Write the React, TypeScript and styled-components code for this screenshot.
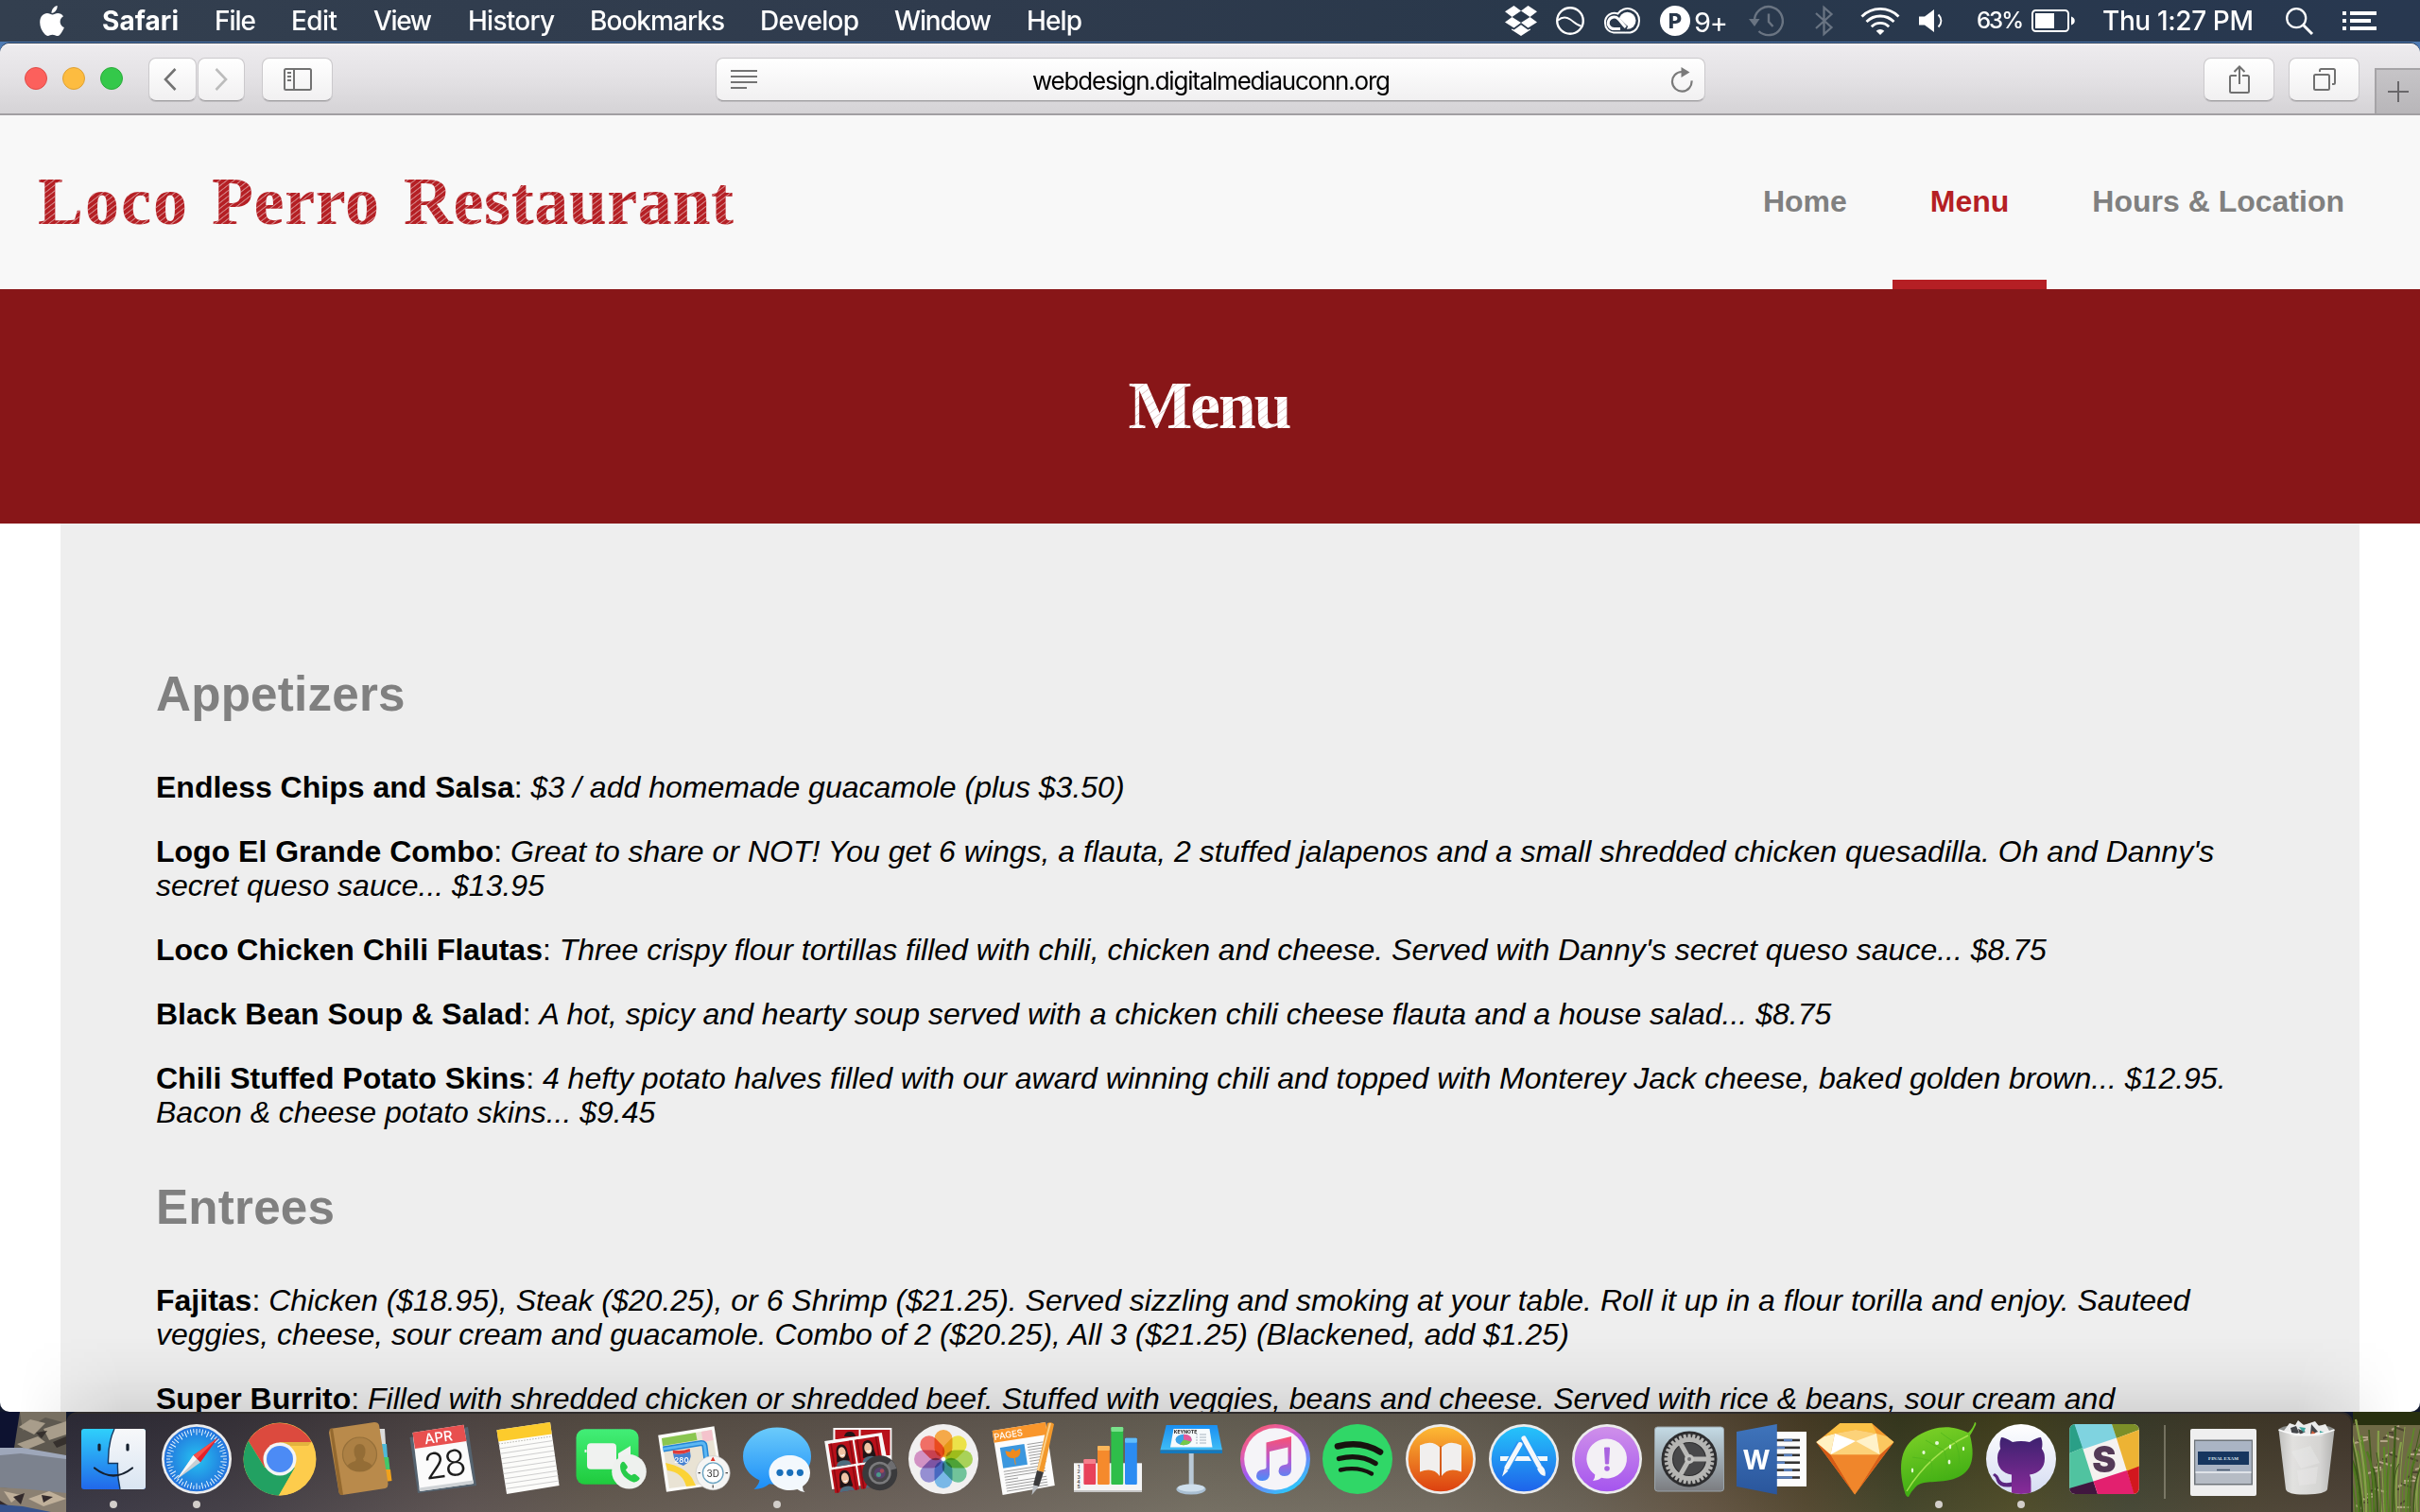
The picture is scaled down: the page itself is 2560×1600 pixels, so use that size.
import React, { useLayoutEffect, useRef, useState } from "react";
import styled, { createGlobalStyle } from "styled-components";

const GlobalStyle = createGlobalStyle`
  *, *::before, *::after { box-sizing: border-box; }
  html, body { margin: 0; padding: 0; width: 2560px; height: 1600px; overflow: hidden; background: #1a2438; }
  svg { display: block; overflow: visible; flex: none; }
`;

const ui = `Inter, Roboto, "Liberation Sans", sans-serif`;
const sans = `"Liberation Sans", Arial, Helvetica, sans-serif`;
const serif = `"Liberation Serif", "Times New Roman", serif`;

/* ---------- Fitted text: spreads the letters over an exact width ---------- */

const FitBox = styled.span<{ $w: number }>`
  display: inline-block;
  width: ${(p) => p.$w}px;
  white-space: nowrap;
  flex: none;
`;

function Fit({ w, children, className }: { w: number; children: string; className?: string }) {
  const ref = useRef<HTMLSpanElement>(null);
  const [spacing, setSpacing] = useState(0);
  useLayoutEffect(() => {
    if (!ref.current) return;
    const natural = ref.current.getBoundingClientRect().width;
    setSpacing((w - natural) / Math.max(1, children.length - 1));
  }, [w, children]);
  return (
    <FitBox $w={w} className={className}>
      <span ref={ref} style={{ letterSpacing: spacing }}>
        {children}
      </span>
    </FitBox>
  );
}

/* ---------- Desktop ---------- */

const Screen = styled.div`
  width: 2560px;
  height: 1600px;
  display: flex;
  flex-direction: column;
  overflow: hidden;
  background: linear-gradient(#4a6f9f 0, #4f7db8 60px, #131c36 200px, #11182c 100%);
`;

const MenuBar = styled.header`
  height: 44px;
  flex: none;
  display: flex;
  align-items: center;
  justify-content: space-between;
  padding: 0 46px 0 42px;
  background: linear-gradient(90deg, #333f4f 0%, #2f3b4d 40%, #29384b 65%, #283850 100%);
  color: #fff;
  font-family: ${ui};
`;

const MenuList = styled.nav`
  display: flex;
  align-items: center;
  height: 44px;
`;

const MenuWord = styled(Fit)<{ $gap: number; $bold?: boolean }>`
  margin-left: ${(p) => p.$gap}px;
  font-size: 28px;
  line-height: 44px;
  font-weight: ${(p) => (p.$bold ? 700 : 500)};
`;

const StatusArea = styled.div`
  display: flex;
  align-items: center;
  height: 44px;
`;

const StatusItem = styled.div<{ $gap: number; $dim?: boolean }>`
  margin-left: ${(p) => p.$gap}px;
  display: flex;
  opacity: ${(p) => (p.$dim ? 0.3 : 1)};
`;

const StatusWord = styled(Fit)<{ $gap: number; $size: number; $weight?: number; $drop?: number }>`
  margin-left: ${(p) => p.$gap}px;
  margin-top: ${(p) => p.$drop ?? 0}px;
  font-size: ${(p) => p.$size}px;
  line-height: 44px;
  font-weight: ${(p) => p.$weight ?? 500};
`;

const Window = styled.main`
  height: 1448px;
  margin-top: 2px;
  flex: none;
  display: flex;
  flex-direction: column;
  overflow: hidden;
  position: relative;
  border-radius: 10px;
  background: #fff;
  box-shadow: 0 -1px 0 #22334c;
`;

const Toolbar = styled.div`
  height: 76px;
  flex: none;
  display: flex;
  align-items: flex-start;
  padding: 15px 0 0 26px;
  background: linear-gradient(#f6f5f7 0, #edebee 3px, #e4e2e5 35px, #d5d3d6 74px);
  border-bottom: 2px solid #a19fa2;
`;

const Lights = styled.div`
  display: flex;
  gap: 16px;
  margin-top: 10px;
`;

const Light = styled.i<{ $fill: string; $edge: string }>`
  width: 24px;
  height: 24px;
  border-radius: 50%;
  background: ${(p) => p.$fill};
  border: 1px solid ${(p) => p.$edge};
`;

const ToolButton = styled.div<{ $w: number; $gap: number; $padRight?: number }>`
  width: ${(p) => p.$w}px;
  height: 46px;
  margin-left: ${(p) => p.$gap}px;
  padding-right: ${(p) => p.$padRight ?? 0}px;
  flex: none;
  display: flex;
  align-items: center;
  justify-content: center;
  border-radius: 8px;
  border: 1px solid #cbc9cc;
  border-bottom: 1px solid #a3a1a4;
  background: linear-gradient(#fff, #f1f0f1);
  box-shadow: 0 1px 0 rgba(0, 0, 0, 0.12);
`;

const AddressBar = styled(ToolButton)`
  justify-content: space-between;
  padding: 0 12px 0 15px;
`;

const Address = styled(Fit)`
  font-family: ${ui};
  font-size: 26px;
  line-height: 44px;
  color: #000;
  margin: 3px 6px 0 0;
`;

const NewTab = styled.div`
  width: 48px;
  height: 48px;
  margin: 11px 0 0 16px;
  flex: none;
  display: flex;
  align-items: center;
  justify-content: center;
  border-top: 2px solid #a5a3a6;
  border-left: 2px solid #a5a3a6;
  background: linear-gradient(#c6c4c7, #b8b6b9);
`;

/* ---------- Restaurant page ---------- */

const SiteHeader = styled.div`
  height: 184px;
  flex: none;
  display: flex;
  justify-content: space-between;
  padding: 0 40px;
  background: #f8f8f8;
`;

const Brand = styled.h1`
  margin: 0;
  display: flex;
  gap: 26px;
  font: 700 72px/182px ${serif};
  color: transparent;
  background:
    repeating-linear-gradient(142deg, rgba(248, 248, 248, 0) 0 2.6px, rgba(248, 248, 248, 0.42) 3.2px 3.8px, rgba(248, 248, 248, 0) 4.4px 4.7px),
    #b51f24;
  -webkit-background-clip: text;
  background-clip: text;
`;

const SiteNav = styled.nav`
  display: flex;
  gap: 8px;
`;

const NavItem = styled.a<{ $active?: boolean }>`
  height: 184px;
  padding: 73px 40px 0;
  font: 700 32px/36px ${sans};
  color: ${(p) => (p.$active ? "#b51f24" : "#808080")};
  border-bottom: 10px solid ${(p) => (p.$active ? "#b51f24" : "transparent")};
`;

const Banner = styled.section`
  height: 248px;
  flex: none;
  display: flex;
  justify-content: center;
  background: #881618;
`;

const BannerTitle = styled.h2`
  margin: 0;
  font: 700 72px/246px ${serif};
  color: transparent;
  background:
    repeating-linear-gradient(142deg, rgba(136, 22, 24, 0) 0 4.5px, rgba(136, 22, 24, 0.22) 5px 5.4px, rgba(136, 22, 24, 0) 6px 7px),
    #fff;
  -webkit-background-clip: text;
  background-clip: text;
`;

const Sheet = styled.section`
  height: 940px;
  flex: none;
  margin: 0 64px;
  padding: 98px 99px 0 101px;
  overflow: hidden;
  background: #eee;
`;

const Course = styled.h3`
  margin: 54px 0 51px;
  font: 700 51.2px/58px ${sans};
  letter-spacing: 0.2px;
  color: #808080;
`;

const Dish = styled.p`
  margin: 0 0 32px;
  font: 32px/36px ${sans};
  color: #000;
  white-space: nowrap;
`;

const DockShade = styled.div`
  position: absolute;
  left: 0;
  right: 0;
  bottom: 0;
  height: 80px;
  pointer-events: none;
  background: linear-gradient(transparent, rgba(0, 0, 0, 0.03) 50%, rgba(0, 0, 0, 0.1));
  mask-image: linear-gradient(90deg, transparent 20px, #000 130px, #000 2430px, transparent 2540px);
`;

/* ---------- Dock ---------- */

const DockRow = styled.footer`
  height: 106px;
  flex: none;
  display: flex;
`;

const Dock = styled.div`
  width: 2419px;
  height: 106px;
  flex: none;
  display: flex;
  padding: 10px 0 0 6.3px;
  border-radius: 12px 12px 0 0;
  border-top: 2px solid #2f2c2c;
  border-right: 2px solid #2f2a24;
  background:
    linear-gradient(rgba(0, 0, 0, 0.12), rgba(255, 255, 255, 0.06)),
    linear-gradient(90deg, #302e3b 0, #3a353d 170px, #554b49 420px, #5b5147 560px, #655b53 900px, #6d675a 1200px, #6a6357 1450px, #625a4d 1600px, #5b4c39 1740px, #4c4027 1840px, #3a3c20 1940px, #47441f 2060px, #3d3f2c 2180px, #453d2b 2300px, #453a2e 2419px);
`;

const DockCell = styled.div<{ $w: number }>`
  width: ${(p) => p.$w}px;
  flex: none;
  display: flex;
  flex-direction: column;
  align-items: center;
`;

const RunDot = styled.i`
  width: 8px;
  height: 8px;
  margin-top: 2px;
  border-radius: 50%;
  background: #d2ceca;
`;

const DockLine = styled.div`
  width: 2px;
  height: 78px;
  margin: 2px 17px 0 19px;
  flex: none;
  background: rgba(200, 195, 175, 0.4);
`;

/* ---------- Small drawings ---------- */

const AppleMark = () => (
  <svg width="27" height="32" viewBox="0 0 27 32" fill="#fff">
    <path d="M18.6 0c.3 2.6-.8 4.6-2.1 6-1.300 1.300-2.600 1.900-4 1.900-.2-2.200.8-4.200 2-5.500C15.600 1.100 17.200.3 18.600 0z" />
    <path d="M13.500 9.600c1.500 0 3.200-1.500 5.700-1.500 2.200 0 4.400 1 5.800 3.100-5 3-4.200 9.900.9 11.900-1 2.700-2.400 5.200-4.300 7.300-1 1-2 1.500-3.200 1.500-1.900 0-2.600-1.100-4.900-1.100-2.300 0-3.100 1.100-4.900 1.100-1.300 0-2.400-.7-3.400-1.800C2 26.500.2 22 .2 17.800.2 11.500 4 8.100 7.900 8.100c2.300 0 4.200 1.500 5.600 1.500z" />
  </svg>
);

const DropboxMark = () => (
  <svg width="34" height="32" viewBox="0 0 34 32" fill="#fff">
    <path d="M9.500 0 17 5.500 7.500 12 0 6.200zM24.500 0 34 6.200 26.500 12 17 5.500zM7.500 12 17 18l-7.500 5.500L0 17.500zM26.500 12 34 17.500l-9.500 6L17 18z" />
    <path d="m7 24.500 2.700 1L17 20.200l7.300 5.300 2.700-1v1L17 32 7 25.500z" />
  </svg>
);

const WaveMark = () => (
  <svg width="30" height="30" viewBox="0 0 30 30" fill="none" stroke="#fff">
    <circle cx="15" cy="15" r="13.800" strokeWidth="2.400" />
    <path d="M2 14.500C6 11 10.500 10.500 15 13.500S22 19.500 26.500 20.500" strokeWidth="2" />
  </svg>
);

const CloudMark = () => (
  <svg width="38" height="28" viewBox="0 0 38 28">
    <path d="M10 26.500h17.500A10.500 12.500 0 0 0 37 14 12.300 12.300 0 0 0 14.500 6.500 9.800 10 0 0 0 1 16.500a9.800 10 0 0 0 9 10z" fill="none" stroke="#fff" strokeWidth="2" />
    <circle cx="24.500" cy="13.800" r="9" fill="#fff" />
    <path d="M14 14c3 1.500 6 7 10 8.500" fill="none" stroke="#29384b" strokeWidth="6" />
    <path d="M17 22.500h-6.500a6.200 6.200 0 1 1 4.300-10.600c2.600 2.200 4.700 6 8 9" fill="none" stroke="#fff" strokeWidth="3" />
  </svg>
);

const BadgeDisc = styled.span`
  width: 32px;
  height: 32px;
  border-radius: 50%;
  background: #fff;
  color: #29384b;
  font: 800 22px/32px ${ui};
  text-align: center;
`;

const TimeMachine = () => (
  <svg width="37" height="33" viewBox="0 0 37 33" fill="none" stroke="#fff" strokeWidth="2.400">
    <path d="M6 14a15 15 0 1 1 4.500 13" />
    <path d="M21 8.500v8.500l4.500 5" />
    <path d="M0 14h11.500L6 22z" fill="#fff" stroke="none" />
  </svg>
);

const Bluetooth = () => (
  <svg width="19" height="32" viewBox="0 0 19 32" fill="none" stroke="#fff" strokeWidth="2.200">
    <path d="m1 8 16.500 15L9.500 30V2l8 7L1 24" />
  </svg>
);

const Wifi = () => (
  <svg width="42" height="29" viewBox="0 0 42 29" fill="none" stroke="#fff" strokeWidth="2.800">
    <path d="M1.500 9.500a27.500 27.500 0 0 1 39 0" />
    <path d="M6.500 15a20.500 20.500 0 0 1 29 0" />
    <path d="M11.800 20.200a13 13 0 0 1 18.400 0" />
    <path d="M21 29l-4.300-4.300a6 6 0 0 1 8.600 0z" fill="#fff" stroke="none" />
  </svg>
);

const Speaker = () => (
  <svg width="26" height="24" viewBox="0 0 26 24">
    <path d="M0 7.500h6L16 0v24L6 16.500H0z" fill="#fff" />
    <path d="M20.500 5.500c3.800 4 3.800 9 0 13" fill="none" stroke="#fff" strokeWidth="2" />
  </svg>
);

const Battery = () => (
  <svg width="46" height="24" viewBox="0 0 46 24">
    <rect x="1" y="1" width="38" height="22" rx="3.500" fill="none" stroke="#fff" strokeWidth="2" />
    <rect x="4" y="4" width="20" height="16" fill="#fff" />
    <path d="M42 7.500c5 1.500 5 7.500 0 9z" fill="#fff" />
  </svg>
);

const SearchGlyph = () => (
  <svg width="29" height="29" viewBox="0 0 29 29" fill="none" stroke="#fff">
    <circle cx="11.200" cy="11.200" r="10" strokeWidth="2.300" />
    <path d="m18.500 18.500 9.500 9.500" strokeWidth="3" />
  </svg>
);

const ListGlyph = () => (
  <svg width="36" height="20" viewBox="0 0 36 20" fill="#fff">
    <path d="M0 0h4v4H0zM8 0h28v4H8zM0 8h4v4H0zM8 8h22v4H8zM0 16h4v4H0zM8 16h28v4H8z" />
  </svg>
);

const Chevron = ({ flip, color }: { flip?: boolean; color: string }) => (
  <svg width="14" height="24" viewBox="0 0 14 24" fill="none" stroke={color} strokeWidth="2.600">
    <path d={flip ? "M1.500 1 12 12 1.500 23" : "M12.500 1 2 12l10.500 11"} />
  </svg>
);

const SidebarGlyph = () => (
  <svg width="30" height="24" viewBox="0 0 30 24" fill="none" stroke="#727272" strokeWidth="2">
    <rect x="1" y="1" width="28" height="22" rx="1.500" />
    <path d="M11 1v22M4 5h4M4 9h4M4 13h4" />
  </svg>
);

const ReaderGlyph = () => (
  <svg width="28" height="20" viewBox="0 0 28 20" fill="#737373">
    <path d="M0 0h28v2H0zM0 6h28v2H0zM0 12h28v2H0zM0 18h17v2H0z" />
  </svg>
);

const ReloadGlyph = () => (
  <svg width="23" height="27" viewBox="0 0 23 27">
    <path d="M11 5a10.300 10.300 0 1 0 10.500 9.300" fill="none" stroke="#7a7a7a" strokeWidth="2.200" />
    <path d="M10.500 0 19.500 5.500 10.500 11z" fill="#7a7a7a" />
  </svg>
);

const ShareGlyph = () => (
  <svg width="22" height="30" viewBox="0 0 22 30" fill="none" stroke="#707070" strokeWidth="2">
    <path d="M8 11H2.500Q1 11 1 12.500v15Q1 29 2.500 29h17q1.500 0 1.500-1.500v-15Q21 11 19.500 11H14M11 20V1.500M5.500 7 11 1.500 16.500 7" />
  </svg>
);

const TabsGlyph = () => (
  <svg width="24" height="24" viewBox="0 0 24 24" fill="none" stroke="#707070" strokeWidth="2">
    <rect x="1" y="7" width="16" height="16" rx="1.500" />
    <path d="M7 4V2.500Q7 1 8.500 1H21.500Q23 1 23 2.500V15.500Q23 17 21.500 17H20" />
  </svg>
);

const PlusGlyph = () => (
  <svg width="22" height="22" viewBox="0 0 22 22" stroke="#69676a" strokeWidth="2">
    <path d="M11 0v22M0 11h22" />
  </svg>
);

/* ---------- Dock icons, drawn round a centre origin ---------- */

type Stop = [string, string];
const Grad = ({ id, stops, x2 = 0, y2 = 1 }: { id: string; stops: Stop[]; x2?: number; y2?: number }) => (
  <linearGradient id={id} x1="0" y1="0" x2={x2} y2={y2}>
    {stops.map(([o, c]) => (
      <stop key={o} offset={o} stopColor={c} />
    ))}
  </linearGradient>
);

const Ring = ({ fill }: { fill: string }) => (
  <>
    <circle r="37" fill="#ececec" />
    <circle r="34.300" fill={`url(#${fill})`} />
  </>
);

const range = (n: number) => Array.from({ length: n }, (_, i) => i);

const Finder = () => (
  <>
    <Grad id="fi1" stops={[["0", "#2fd0fb"], ["1", "#2168ea"]]} />
    <Grad id="fi2" stops={[["0", "#f7f8fa"], ["1", "#d9e5f2"]]} />
    <rect x="-34" y="-32" width="68" height="64" rx="3" fill="url(#fi1)" />
    <path d="M1-32h30q3 0 3 3v58q0 3-3 3H7Q4 19 4.500 4.500H-5.500Q-6-17 1-32z" fill="url(#fi2)" />
    <path d="M1-32Q-6-17-5.500 4.500H4.500Q4 19 7 32" fill="none" stroke="#14375e" strokeWidth="1.400" />
    <path d="M-15-15v5M15-15v5" stroke="#15202e" strokeWidth="3.200" strokeLinecap="round" />
    <path d="M-20 9.500q20 16 40 0" fill="none" stroke="#15202e" strokeWidth="2.200" strokeLinecap="round" />
  </>
);

const SafariIcon = () => (
  <>
    <radialGradient id="sa">
      <stop offset="0" stopColor="#26c3f1" />
      <stop offset="1" stopColor="#2272dc" />
    </radialGradient>
    <Ring fill="sa" />
    {range(60).map((i) => (
      <path key={i} d={i % 2 ? "M0-32v4" : "M0-32v6.500"} stroke="#e8f5fd" strokeWidth="1" transform={`rotate(${i * 6})`} />
    ))}
    <path d="M22.500-22.500 4 3.500-3.500-4z" fill="#e5202b" />
    <path d="M22.500-22.500-3.500-4 0 0z" fill="#f8514a" />
    <path d="M-21 21.500-3.500-4 4 3.500z" fill="#c9cfd4" />
    <path d="M-21 21.500-3.500-4 0 0z" fill="#f6f7f8" />
  </>
);

const Chrome = () => (
  <>
    <circle r="38.500" fill="#fdcc4c" />
    <path d="M-33.300-19.200A38.500 38.500 0 0 1 33.500-18H0L-16 9z" fill="#dc4a3e" />
    <path d="M-33.300-19.200A38.500 38.500 0 0 0-1 38.500L16 9-16 9z" fill="#22a162" />
    <path d="M33.500-18A38.500 38.500 0 0 1-1 38.500L16 9 8-18z" fill="#fdcc4c" />
    <path d="M33.500-18H0v4h30z" fill="#c99a2f" opacity=".5" />
    <circle r="17.500" fill="#f4f4f4" />
    <circle r="14" fill="#4c8bf5" />
  </>
);

const Contacts = () => (
  <>
    <path d="M18-32 24-32 25-16 20-16z" fill="#dcdcdc" />
    <path d="M20-16 26-16 27-2 22-2z" fill="#4fb9d8" />
    <path d="M22-2 28-2 29.500 11 23 11z" fill="#43c869" />
    <path d="M23 11 30 11 31.500 23 24 24z" fill="#f0a21c" />
    <path d="M-34-32 13-39q4 0 5 3l9.500 62q0 4-3 5L-21 38q-3 0-3.500-3L-35-28z" fill="#b98a4b" />
    <path d="M-34-32-31-32.500-20 37.800-21 38q-3 0-3.500-3z" fill="#94692f" />
    <circle cx="-2.500" cy="-5" r="18" fill="#ac8044" stroke="#96703a" strokeWidth="1.200" />
    <path d="M-2.500-16q6 0 6 8 0 5-2.500 7.500l1 2.500q7 2 8.500 5-5 6-13 6t-13-6q2-3 8.500-5l.8-2.500Q-8.500-3-8.500-8q0-8 6-8z" fill="#946d36" />
  </>
);

const IconText = styled.text<{ $size: number; $weight?: number; $serif?: boolean }>`
  font-family: ${(p) => (p.$serif ? serif : ui)};
  font-size: ${(p) => p.$size}px;
  font-weight: ${(p) => p.$weight ?? 400};
  text-anchor: middle;
`;

const CalendarIcon = () => (
  <>
    <path d="M-37.500-23 24-34 33 28-29 36z" fill="#55636f" />
    <path d="M-34.500-28 19.400-36.300 30 26-27 34z" fill="#fbfbfb" />
    <path d="M-34.500-28 19.400-36.300 22.500-19-32-11z" fill="#e8504f" />
    <path d="M-27 34 30 26 29.400 22.500-27.600 30.500z" fill="#cfd3d6" />
    <g transform="rotate(-8)">
      <IconText $size={15} $weight={500} x="-4" y="-18.500" fill="#fff">APR</IconText>
      <IconText $size={38} $weight={300} x="-2" y="19" fill="#1c1c1c" letterSpacing="-2">28</IconText>
    </g>
  </>
);

const NotesIcon = () => (
  <>
    <path d="M-33.500-30.700 23-39 32.600 28-23 37z" fill="#fcfcfa" />
    <path d="M-33.500-30.700 23-39 24.700-26.500-31.800-18.500z" fill="#fccb2c" />
    {range(9).map((i) => (
      <path key={i} d={`M${-30.800 + i * 0.9} ${-11 + i * 5.300}l56-8.400`} stroke="#c8c8c8" strokeWidth=".9" />
    ))}
    <path d="M-31.500-16l56-8" stroke="#a9a9a0" strokeWidth=".9" strokeDasharray="1.500 1.500" />
  </>
);

const Handset = () => (
  <path d="M-8-9.500q1.500-2 3-.5l3 4q1 1.500-.5 3l-1.200 1.300Q-1.500 2 2.500 4l1.500-1q1.500-1 3 0l3.500 3q1.500 1.200 0 2.800Q7.500 12 4 11-9 6-9.500-5.500-9.500-8-8-9.500z" />
);

const FaceTime = () => (
  <>
    <Grad id="ft" stops={[["0", "#42ee77"], ["1", "#1fcb3d"]]} />
    <rect x="-37.500" y="-31.700" width="66" height="58.500" rx="9" fill="url(#ft)" />
    <rect x="-26" y="-16.700" width="31" height="27.500" rx="4" fill="#f0f2f0" />
    <path d="M-28.500-10h2v3h-2z" fill="#f0f2f0" />
    <path d="M7-6 20-14V9L7 2z" fill="#f0f2f0" />
    <circle cx="18.500" cy="13.300" r="18.300" fill="#eef1ee" />
    <g transform="translate(18.500 13.300)" fill="#27cc49"><Handset /></g>
  </>
);

const MapsIcon = () => (
  <>
    <path d="M-37.800-25.300 21.500-34.700 31 26-29 34.700z" fill="#fbfbf9" />
    <path d="M-34-22 19-31 28 24-26 31z" fill="#e9e3d4" />
    <path d="M-34-22 2-28 3.500-20-33-14z" fill="#8ac650" />
    <path d="M8-29 19-31 20.500-20 9.500-18z" fill="#f4c3cc" />
    <path d="M-30 4Q-10 8-2 20L2 28-8 29Q-12 14-28 12z" fill="#fbd337" />
    <path d="M-32.500-10.500 8-17q3 0 3.500 3L14 6" fill="none" stroke="#2285d6" strokeWidth="6" />
    <path d="M-32.500-10.500 8-17q3 0 3.500 3L14 6" fill="none" stroke="#5db7f2" strokeWidth="3" />
    <path d="M-22-6q9 2 18-2 3 10-7 15-10-2-11-13z" fill="#4682d2" />
    <path d="M-22-6q9 2 18-2l-.3-3q-8 3-18 1.500z" fill="#df3a3a" />
    <IconText $size={8} $weight={600} x="-13" y="4" fill="#fff">280</IconText>
    <circle cx="20.200" cy="14.700" r="18" fill="#f5f5f4" stroke="#c3c3c3" strokeWidth=".6" />
    <circle cx="20.200" cy="14.700" r="10.800" fill="#fff" stroke="#6da5c2" strokeWidth="1.400" />
    <path d="M20.200-2.500 22.600 2h-4.800z" fill="#e23528" />
    <path d="M20.200 27.500v3M4.500 14.700h2.500M33.500 14.700H36" stroke="#444" strokeWidth="1.200" />
    <IconText $size={10} x="20.200" y="18.500" fill="#333">3D</IconText>
  </>
);

const MessagesIcon = () => (
  <>
    <Grad id="ms" stops={[["0", "#6bcbfb"], ["1", "#1c8ef8"]]} />
    <path d="M0-33.500C20-33.500 36-20 36-3S20 27 0 27q-4 0-8-.7-7 5.500-16.500 5.700 5-4.500 6-9.500C-30 17-36 8-36-3-36-20-20-33.500 0-33.500z" fill="url(#ms)" />
    <path d="M13.500-4C26-4 35 4 35 14.500q0 9-8 14.500 0 4 2.500 6-5-.5-8-3-4 1-8 1C1 33-8.500 25-8.500 14.500S1-4 13.500-4z" fill="#f3f8fd" />
    <g fill="#1a70bb">
      <circle cx="3" cy="14.300" r="3.600" />
      <circle cx="13.700" cy="14.300" r="3.600" />
      <circle cx="24.400" cy="14.300" r="3.600" />
    </g>
  </>
);

const Portrait = ({ x, y }: { x: number; y: number }) => (
  <g transform={`translate(${x} ${y})`}>
    <rect x="-13" y="-12.500" width="26" height="25" fill="#b8111a" />
    <path d="M-10-12.500v25M10-12.500v25" stroke="#8c0911" strokeWidth="1.600" />
    <path d="M0-10c5.500 0 6 6 6 11l1 7H-7l1-7C-6-4-5.500-10 0-10z" fill="#211517" />
    <ellipse cx="0" cy="-1.500" rx="4" ry="5.800" fill="#efc3a4" />
    <path d="M-8 12.500q1-5.500 8-5.500t8 5.500z" fill="#4d6c7e" />
    <path d="M-2 1q2 2 4 0" stroke="#fff" strokeWidth="1.200" fill="none" />
  </g>
);

const PhotoBooth = () => (
  <>
    <rect x="-28.600" y="-33" width="62" height="34" fill="#f6f6f6" />
    <path d="M-26.500-31H-1.500v10h-25zM.5-31h31V-4H.5z" fill="#b8111a" />
    <path d="M-17-24q1-5 6-5t6 5z" fill="#211517" />
    <path d="M-37.800-19 22.800-28 33 24-29.800 32z" fill="#f8f8f8" />
    <g transform="rotate(-9)">
      <Portrait x={-18} y={-8.500} />
      <Portrait x={10} y={-8.500} />
      <Portrait x={-19} y={19} />
      <Portrait x={9} y={19} />
    </g>
    <circle cx="20.700" cy="14.700" r="18.500" fill="#3a3a3c" />
    <path d="M20.700 14.700 33 1A18.500 18.500 0 0 1 38.500 10z" fill="#6d6d70" />
    <circle cx="20.700" cy="14.700" r="12" fill="#7a7a7c" />
    <circle cx="20.700" cy="14.700" r="9.500" fill="#454547" />
    <circle cx="20.700" cy="14.700" r="6" fill="#57426b" />
    <circle cx="19.500" cy="16.500" r="2.500" fill="#4b9a8a" />
    <circle cx="23" cy="12.500" r="2.200" fill="#a44a55" />
  </>
);

const petals = ["#f6a33a", "#ece13a", "#a3cf4c", "#66bf92", "#6fb3e6", "#8d86cf", "#cf8ac0", "#f0645a"];
const Petals = styled.g`
  isolation: isolate;
  rect { mix-blend-mode: multiply; }
`;
const PhotosIcon = () => (
  <>
    <circle r="37" fill="#f1f0f0" />
    <Petals>
      {petals.map((c, i) => (
        <rect key={c} x="-9.500" y="-31" width="19" height="29" rx="9.500" fill={c} opacity=".92" transform={`rotate(${i * 45})`} />
      ))}
    </Petals>
    <circle r="1.800" fill="#fff" />
  </>
);

const PagesIcon = () => (
  <>
    <path d="M-35.300-30 21-39 30.800 28-24.400 38z" fill="#fcfcfc" />
    <path d="M-35.300-30 21-39 22.800-26-33.400-17.300z" fill="#f9962b" />
    <g transform="rotate(-9)">
      <IconText $size={9.500} $weight={500} x="-14" y="-25" fill="#fff">PAGES</IconText>
      <rect x="-25" y="-16" width="26" height="22" fill="#3b97de" />
      <path d="M-12 4v-7q-8 0-8-9l5 2 3-3 3 3 5-2q0 9-7 9v7z" fill="#f08a1d" />
      {range(8).map((i) => (
        <path key={i} d={`M4 ${-15 + i * 3}h17`} stroke="#999" strokeWidth=".9" />
      ))}
      {range(8).map((i) => (
        <path key={i} d={`M-25 ${9.500 + i * 3}h${i === 3 ? 14 : 44}`} stroke="#999" strokeWidth=".9" />
      ))}
    </g>
    <path d="M23-38q4-2 7 1L19 14l-7-2z" fill="#f3992b" />
    <path d="M25-38l2 0L14 12.400l-2-.5z" fill="#fbd08a" />
    <path d="M12 12l7 2-5 15-6-1.500z" fill="#3a3a3c" />
    <path d="M8 27.500l6 1.500-7.500 9z" fill="#b9bdc2" />
  </>
);

const Bar = ({ x, y, c, t }: { x: number; y: number; c: string; t: string }) => (
  <>
    <rect x={x} y={y} width="12.800" height={27 - y} rx="1.200" fill={c} />
    <rect x={x} y={y} width="12.800" height="5" rx="1.200" fill={t} />
  </>
);

const NumbersIcon = () => (
  <>
    <rect x="-37" y="4.300" width="72" height="30" fill="#f5f5f5" />
    <path d="M-37 33h72v2h-72z" fill="#c5c5c5" />
    {[1, 2, 3, 4, 5].map((n) => (
      <IconText key={n} $size={5} $weight={700} x="-32" y={5 + n * 5.200} fill="#555">{n}</IconText>
    ))}
    <Bar x={-26.600} y={0} c="#e8425a" t="#f5808c" />
    <Bar x={-12} y={-14} c="#f58a2c" t="#fab75c" />
    <Bar x={2.400} y={-34} c="#2fbe4a" t="#79e28b" />
    <Bar x={17} y={-22.300} c="#2b8cf2" t="#62bdfa" />
  </>
);

const KeynoteIcon = () => (
  <>
    <Grad id="ke" stops={[["0", "#1a8ff2"], ["1", "#3fbdf6"]]} />
    <rect x="-3.300" y="-6" width="5" height="38" fill="#b9c9d6" />
    <ellipse cx="-1" cy="32" rx="15.600" ry="5.500" fill="#a9bfd2" />
    <ellipse cx="-1" cy="30.500" rx="14" ry="4" fill="#cfdfec" />
    <path d="M-27.300-36H26.600L32-9.500H-33.600z" fill="url(#ke)" />
    <path d="M-33.600-9.500H32V-6H-33.600z" fill="#1579bd" />
    <path d="M-19.500-32H18.500L21.500-12.500H-23z" fill="#f7fafc" />
    <IconText $size={5} $weight={800} x="-7" y="-27.500" fill="#333">KEYNOTE</IconText>
    <ellipse cx="-9" cy="-20.500" rx="8.500" ry="5.800" fill="#3ba3e8" />
    <path d="M-9-20.500v-5.800a8.500 5.800 0 0 1 8 8z" fill="#e35a9a" />
    <path d="M-9-20.500l8 2a8.500 5.800 0 0 1-12 3z" fill="#76c84a" />
    <path d="M4-26h2M4-23h2M4-20h2M4-17h2M8-26h7M8-23h7M8-20h7M8-17h7" stroke="#a7b4c0" strokeWidth="1.200" />
  </>
);

const ITunes = () => (
  <>
    <Grad id="it1" x2={0.6} stops={[["0", "#fd5b52"], [".35", "#e25bb0"], [".6", "#9a5cf5"], ["1", "#2fc3fb"]]} />
    <Grad id="it2" stops={[["0", "#fb5070"], [".55", "#b35cd6"], ["1", "#4a8cf8"]]} />
    <circle r="37" fill="url(#it1)" />
    <circle r="32.800" fill="#f5f4f8" />
    <path d="M-9.500-17.500 17-24V11q0 6.500-7 7-6 0-6.500-5 0-6 6.500-7 3-.2 3.500-2V-12.500L-6-8V16.500q-.5 6-7.500 6.500-6.500 0-6.500-5 0-6 7-7 3-.2 3.500-2z" fill="url(#it2)" />
  </>
);

const Spotify = () => (
  <>
    <circle r="37" fill="#30d767" />
    <g fill="none" stroke="#17130f" strokeLinecap="round">
      <path d="M-21-13.500Q4-20 24-7.500" strokeWidth="6.600" />
      <path d="M-19.500-.5Q2-6 19 4.500" strokeWidth="5.400" />
      <path d="M-18 11.500Q1 7.500 15 15.500" strokeWidth="4.400" />
    </g>
  </>
);

const Books = () => (
  <>
    <Grad id="ib" stops={[["0", "#fdbb35"], ["1", "#dc4010"]]} />
    <Ring fill="ib" />
    <path d="M-1 18Q-8 8-22 13.500V-14.500Q-9-21-1-12.500zM1 18Q8 8 22 13.500V-14.500Q9-21 1-12.500z" fill="#f1efee" />
    <path d="M0-14V19" stroke="#c94d1a" strokeWidth="1.200" />
  </>
);

const AppStore = () => (
  <>
    <Grad id="as" stops={[["0", "#25c4fa"], ["1", "#1e63ea"]]} />
    <Ring fill="as" />
    <g stroke="#f4f8fb" fill="none">
      <path d="M-25-.5h50" strokeWidth="5" />
      <path d="M-4-17-18 9.500" strokeWidth="7.500" stroke="#2a92f2" />
      <path d="M-1-21 16 8" strokeWidth="7.500" stroke="#2a92f2" />
      <path d="M-4-15.500-18 9" strokeWidth="5" strokeLinecap="round" />
      <path d="M0-22 16 7" strokeWidth="5.200" strokeLinecap="round" />
    </g>
    <path d="M-20.500 10l4 2.500-6.500 6zM14 10l5-3q5 5 3.500 11-6-1-8.500-8z" fill="#f4f8fb" />
  </>
);

const Feedback = () => (
  <>
    <Grad id="fb" stops={[["0", "#cf90ea"], ["1", "#a555ee"]]} />
    <Ring fill="fb" />
    <path d="M0-21.500A21.500 21 0 1 1-6 19.800Q-9 22.500-15 23q2.500-3 2.300-6.500A21.500 21 0 0 1 0-21.500z" fill="#f3f0f5" />
    <path d="M-2.500-12h5L1.600 5h-3.200z" fill="#a963e0" stroke="#a963e0" strokeWidth="1" strokeLinejoin="round" />
    <circle cy="10" r="2.800" fill="#a963e0" />
  </>
);

const Settings = () => (
  <>
    <Grad id="sp" stops={[["0", "#c4dbe6"], ["1", "#7b7c80"]]} />
    <rect x="-36.500" y="-34" width="73" height="68" rx="3" fill="url(#sp)" stroke="#9aa4aa" strokeWidth="1" />
    <circle r="29.500" fill="#2d2d2f" />
    {range(32).map((i) => (
      <path key={i} d="M-1.400-26.500h2.800L2-21h-4z" fill="#b5b5b3" transform={`rotate(${i * 11.250})`} />
    ))}
    <circle r="20.500" fill="none" stroke="#b5b5b3" strokeWidth="5" />
    <circle r="17" fill="#48484a" />
    <path d="M0 0H18M0 0-9-16M0 0-9 16" stroke="#b9b9b7" strokeWidth="5" />
    <circle r="5" fill="#c2c2c0" />
    <circle r="2" fill="#707072" />
  </>
);

const WordIcon = () => (
  <>
    <rect x="0" y="-29" width="36" height="58" fill="#fcfcfc" />
    {range(6).map((i) => (
      <g key={i}>
        <path d={`M4 ${-20 + i * 7.900}h25`} stroke="#333" strokeWidth="2.600" />
        <path d={`M${i % 2 ? 4 : 12} ${-20 + i * 7.900}h${i === 5 ? 17 : 9}`} stroke="#5a80bd" strokeWidth="2.600" />
      </g>
    ))}
    <Grad id="wo" stops={[["0", "#3f74bb"], ["1", "#2a569c"]]} />
    <path d="M-38-29 4.800-37V37.500L-38 29z" fill="url(#wo)" />
    <IconText $size={28} $weight={700} x="-17" y="11" fill="#fff">W</IconText>
  </>
);

const SketchIcon = () => (
  <>
    <path d="M-41.700-18-16.500-38H17L40.400-18-.9 37.500z" fill="#f59a2e" />
    <path d="M-41.700-18-26.500-4.700-.9 37.500z" fill="#d65a16" />
    <path d="M40.400-18 25.600-4.700-.9 37.500z" fill="#d9601a" />
    <path d="M-26.500-4.700H25.600L-.9 37.500z" fill="#f0862b" />
    <path d="M-41.700-18-33-24-22-27-26.500-4.700z" fill="#fff1c2" />
    <path d="M40.400-18 33-24 22-27 25.600-4.700z" fill="#fbc860" />
    <path d="M-16.500-38H17L22-27 0-31-22-27-33-24z" fill="#fbc246" />
    <path d="M-22-27 0-31 22-27 25.600-4.700H-26.500z" fill="#fcd279" />
    <path d="M-22-27 0-19-26.500-4.700z" fill="#fff" />
    <path d="M22-27 0-19 25.600-4.700z" fill="#fff2c9" />
  </>
);

const Leaf = () => (
  <>
    <Grad id="le" x2={0.3} stops={[["0", "#86d62a"], ["1", "#3bab12"]]} />
    <path d="M38-39q2 0 1 3-4 8-6 11C41 6 30 18 12 22-8 26-18 22-25 30q-4 4-7 10-3 0-4-5C-44 6-40-14-22-25-8-33 6-36 20-32q7 2 11 4 5-4 7-11z" fill="url(#le)" />
    <path d="M31-25Q-10-5-34 34" fill="none" stroke="#a4e24e" strokeWidth="1.400" />
    <path d="M18-17Q8-23 2-28M6-9q-12-6-20-11M-8 2q-10-3-20-4M18-17q4 10 4 22M6-9q4 12 2 26M-8 2q2 8 0 18" stroke="#4db31b" strokeWidth="1" fill="none" opacity=".7" />
    <g fill="#e6f8d8">
      <ellipse cx="-2" cy="-17" rx="2" ry="2" />
      <ellipse cx="-16" cy="-7" rx="1.600" ry="2" />
      <ellipse cx="11" cy="3" rx="1.400" ry="2.600" />
      <ellipse cx="12" cy="-13" rx="1.200" ry="2.400" />
      <ellipse cx="26" cy="-11" rx="1.200" ry="2.200" />
      <ellipse cx="-28" cy="12" rx="1.200" ry="2.400" />
    </g>
  </>
);

const Octocat = () => (
  <>
    <Grad id="gh1" stops={[["0", "#ffffff"], ["1", "#d5dcf2"]]} />
    <Grad id="gh2" stops={[["0", "#3e2270"], ["1", "#8a2b9a"]]} />
    <clipPath id="ghc"><circle r="37" /></clipPath>
    <circle r="37" fill="url(#gh1)" />
    <g clipPath="url(#ghc)">
      <path d="M-21-23q4 0 12 5 9-1.800 18 0 8-5 12-5 2.500 6 .8 12 3.200 4 3.200 10 0 15-16 17.500 1.500 3 1.500 7V38H-10V16.500Q-25 14-25-1q0-6 3.200-10-1.700-6 .8-12z" fill="url(#gh2)" />
      <path d="M-28 15q4 2 5 6 3 6 13 3.500v4.800Q-23 31-26 23q-.5-4-4-6z" fill="#5a2580" />
    </g>
  </>
);

const SlackIcon = () => (
  <>
    <clipPath id="slc"><rect x="-36.800" y="-37" width="73.600" height="74" rx="6" /></clipPath>
    <g clipPath="url(#slc)">
      <rect x="-37" y="-37" width="74" height="74" fill="#f5f2f0" />
      <path d="M-37-37h6L-22.500-12-37-6z" fill="#2a9f87" />
      <path d="M-31.500-37H8l5 14.500-35.500 12z" fill="#7fd3e0" />
      <path d="M8-37h29v6L13-22z" fill="#7c8f28" />
      <path d="M13-22 37-31V8.500L24 13z" fill="#edb334" />
      <path d="M-37-6-23-12-11.500 24-37 32.500z" fill="#50c3a0" />
      <path d="M-37 31-11.500 23.500-7 37H-37z" fill="#40163f" />
      <path d="M-11.500 23.500 24 12 32 37H-7z" fill="#e3206f" />
      <path d="M24 12.500 37 7.500V37H31.500z" fill="#d3171e" />
    </g>
    <IconText $size={38} $weight={900} x="0" y="14" fill="#543a57">S</IconText>
  </>
);

const MiniWindow = () => (
  <>
    <rect x="-35" y="-32" width="70" height="71" rx="2" fill="#efefef" />
    <rect x="-31" y="-20.500" width="62" height="48" fill="#6f757b" />
    <rect x="-29.500" y="-19" width="59" height="45" fill="#b6bcc5" />
    <path d="M-29.500-19h59v32h-59z" fill="#aab4c4" />
    <path d="M-29.500 13h59v2h-59z" fill="#dfe3e8" />
    <rect x="-27" y="-8" width="54" height="14" fill="#17365f" />
    <IconText $serif $size={5} $weight={700} x="0" y="1" fill="#dfe5ec">FINAL EXAM</IconText>
    <path d="M-7 11.500H7" stroke="#44566c" strokeWidth="1.500" />
  </>
);

const Trash = () => (
  <>
    <Grad id="tr" x2={1} y2={0} stops={[["0", "#c9cac9"], [".25", "#ececeb"], [".75", "#dededd"], ["1", "#b9bab9"]]} />
    <ellipse cy="-31" rx="29.500" ry="5.500" fill="#8b8d8b" />
    <path d="M-24-30-18-38-12-36-9-41-3-36 3-38 9-40 13-35 20-37 24-30 16-24H-14z" fill="#ececec" />
    <path d="M-17-33l6-2 3 7-7 3zM5-37l7 8-8 3zM-1-29l-6 3-2-6z" fill="#44464a" />
    <path d="M-8-34l7 1-2 5zM14-30l5 2-5 3z" fill="#3fa7a0" />
    <path d="M6-30l5 4-7 2z" fill="#d2603c" />
    <path d="M-29.500-31Q0-20 29.500-31L22 32q-2 5-22 5.500T-22 32z" fill="url(#tr)" opacity=".94" />
    <path d="M-29.500-31Q0-20 29.500-31" fill="none" stroke="#fafafa" strokeWidth="1.500" />
    <path d="M-16-8 4-14 14 4-6 10zM-10 12 12 8 10 26-8 28z" fill="#efefee" opacity=".35" />
  </>
);

const apps: { name: string; Icon: React.FC; running?: boolean }[] = [
  { name: "finder", Icon: Finder, running: true },
  { name: "safari", Icon: SafariIcon, running: true },
  { name: "chrome", Icon: Chrome },
  { name: "contacts", Icon: Contacts },
  { name: "calendar", Icon: CalendarIcon },
  { name: "notes", Icon: NotesIcon },
  { name: "facetime", Icon: FaceTime },
  { name: "maps", Icon: MapsIcon },
  { name: "messages", Icon: MessagesIcon, running: true },
  { name: "photobooth", Icon: PhotoBooth },
  { name: "photos", Icon: PhotosIcon },
  { name: "pages", Icon: PagesIcon },
  { name: "numbers", Icon: NumbersIcon },
  { name: "keynote", Icon: KeynoteIcon },
  { name: "itunes", Icon: ITunes },
  { name: "spotify", Icon: Spotify },
  { name: "ibooks", Icon: Books },
  { name: "appstore", Icon: AppStore },
  { name: "feedback", Icon: Feedback },
  { name: "settings", Icon: Settings },
  { name: "word", Icon: WordIcon },
  { name: "sketch", Icon: SketchIcon },
  { name: "coda", Icon: Leaf, running: true },
  { name: "github", Icon: Octocat, running: true },
  { name: "slack", Icon: SlackIcon },
];

const DockApp = ({ Icon, running }: { Icon: React.FC; running?: boolean }) => (
  <DockCell $w={87.75}>
    <svg width="84" height="80" viewBox="-42 -38 84 80">
      <Icon />
    </svg>
    {running && <RunDot />}
  </DockCell>
);

const Corner = styled.svg`
  && { overflow: hidden; }
`;

const Rocks = () => (
  <Corner width="70" height="106" viewBox="0 0 70 106">
    <rect width="70" height="106" fill="#5d584f" />
    <path d="M0 0h21L15 38 0 40z" fill="#0d1230" />
    <path d="M21 0h49v12L48 6 24 20z" fill="#787062" />
    <path d="M20 16l12-8 16 4-12 12zM46 18l24-8v14L52 30zM18 34l22-8 8 6-20 8z" fill="#a89d8b" />
    <path d="M38 22l12-2-6 8zM56 32l14-6v8l-10 4z" fill="#35302d" />
    <path d="M0 40l26 0 44 8v40L0 80z" fill="#7c828e" />
    <path d="M0 38h24l46 8v4L22 44 0 46z" fill="#9ea7ba" />
    <path d="M0 80l32 2 38 4v20H0z" fill="#8b8072" />
    <path d="M4 84l18 4-10 8zM30 92l22-8 18 8-24 8z" fill="#c0b09a" />
    <path d="M14 90l12-4-4 12zM44 88l12 2-10 6zM0 94l10 6H0z" fill="#332a2c" />
    <path d="M0 98l24 2 30 6H0z" fill="#36528c" />
  </Corner>
);

const blades = ["#4f7a1f", "#3c5a18", "#86a04a", "#5d8a28"];
const Grass = () => (
  <Corner width="71" height="106" viewBox="0 0 71 106">
    <rect width="71" height="106" fill="#6f6a45" />
    <rect width="71" height="14" fill="#28300f" />
    {range(40).map((i) => (
      <path
        key={`s${i}`}
        d={`M${(i * 29) % 71} ${14 + ((i * 17) % 88)}l${5 + (i % 4) * 3} ${((i % 3) - 1) * 4}`}
        stroke={i % 2 ? "#b3a386" : "#4d4530"}
        strokeWidth="2"
      />
    ))}
    {range(34).map((i) => (
      <path
        key={`g${i}`}
        d={`M${(i * 23) % 73} 106Q${((i * 23) % 73) + (i % 7) - 4} 65 ${((i * 23) % 73) + ((i * 11) % 35) - 17} ${6 + ((i * 13) % 56)}`}
        stroke={blades[i % 4]}
        strokeWidth={1 + (i % 3) * 0.6}
        fill="none"
      />
    ))}
  </Corner>
);

/* ---------- Content ---------- */

const menus: [string, number, number][] = [
  ["File", 38, 44],
  ["Edit", 37, 49],
  ["View", 38, 62],
  ["History", 38, 92],
  ["Bookmarks", 37, 143],
  ["Develop", 37, 105],
  ["Window", 37, 103],
  ["Help", 37, 59],
];

type Item = { name: string; lines: string[] };
const courses: { title: string; items: Item[] }[] = [
  {
    title: "Appetizers",
    items: [
      { name: "Endless Chips and Salsa", lines: ["$3 / add homemade guacamole (plus $3.50)"] },
      {
        name: "Logo El Grande Combo",
        lines: [
          "Great to share or NOT! You get 6 wings, a flauta, 2 stuffed jalapenos and a small shredded chicken quesadilla. Oh and Danny's",
          "secret queso sauce... $13.95",
        ],
      },
      {
        name: "Loco Chicken Chili Flautas",
        lines: ["Three crispy flour tortillas filled with chili, chicken and cheese. Served with Danny's secret queso sauce... $8.75"],
      },
      {
        name: "Black Bean Soup & Salad",
        lines: ["A hot, spicy and hearty soup served with a chicken chili cheese flauta and a house salad... $8.75"],
      },
      {
        name: "Chili Stuffed Potato Skins",
        lines: [
          "4 hefty potato halves filled with our award winning chili and topped with Monterey Jack cheese, baked golden brown... $12.95.",
          "Bacon & cheese potato skins... $9.45",
        ],
      },
    ],
  },
  {
    title: "Entrees",
    items: [
      {
        name: "Fajitas",
        lines: [
          "Chicken ($18.95), Steak ($20.25), or 6 Shrimp ($21.25). Served sizzling and smoking at your table. Roll it up in a flour torilla and enjoy. Sauteed",
          "veggies, cheese, sour cream and guacamole. Combo of 2 ($20.25), All 3 ($21.25) (Blackened, add $1.25)",
        ],
      },
      {
        name: "Super Burrito",
        lines: ["Filled with shredded chicken or shredded beef. Stuffed with veggies, beans and cheese. Served with rice & beans, sour cream and"],
      },
    ],
  },
];

export default function App() {
  return (
    <Screen>
      <GlobalStyle />
      <MenuBar>
        <MenuList>
          <AppleMark />
          <MenuWord w={81} $gap={39} $bold>Safari</MenuWord>
          {menus.map(([label, gap, w]) => (
            <MenuWord key={label} w={w} $gap={gap}>{label}</MenuWord>
          ))}
        </MenuList>
        <StatusArea>
          <StatusItem $gap={0}><DropboxMark /></StatusItem>
          <StatusItem $gap={20}><WaveMark /></StatusItem>
          <StatusItem $gap={21}><CloudMark /></StatusItem>
          <StatusItem $gap={21}><BadgeDisc>P</BadgeDisc></StatusItem>
          <StatusWord w={36} $gap={4} $size={29} $weight={400} $drop={4}>9+</StatusWord>
          <StatusItem $gap={22} $dim><TimeMachine /></StatusItem>
          <StatusItem $gap={33} $dim><Bluetooth /></StatusItem>
          <StatusItem $gap={29}><Wifi /></StatusItem>
          <StatusItem $gap={20}><Speaker /></StatusItem>
          <StatusWord w={50} $gap={35} $size={24}>63%</StatusWord>
          <StatusItem $gap={8}><Battery /></StatusItem>
          <StatusWord w={160} $gap={29} $size={28}>Thu 1:27 PM</StatusWord>
          <StatusItem $gap={34}><SearchGlyph /></StatusItem>
          <StatusItem $gap={31}><ListGlyph /></StatusItem>
        </StatusArea>
      </MenuBar>

      <Window>
        <Toolbar>
          <Lights>
            <Light $fill="#fc605c" $edge="#e04b47" />
            <Light $fill="#fdbc40" $edge="#dfa032" />
            <Light $fill="#34c84a" $edge="#2aab3a" />
          </Lights>
          <ToolButton $w={51} $gap={27} $padRight={6}><Chevron color="#737373" /></ToolButton>
          <ToolButton $w={50} $gap={1}><Chevron flip color="#bcbcbc" /></ToolButton>
          <ToolButton $w={75} $gap={18}><SidebarGlyph /></ToolButton>
          <AddressBar $w={1047} $gap={405}>
            <ReaderGlyph />
            <Address w={379}>webdesign.digitalmediauconn.org</Address>
            <ReloadGlyph />
          </AddressBar>
          <ToolButton $w={75} $gap={527}><ShareGlyph /></ToolButton>
          <ToolButton $w={75} $gap={15}><TabsGlyph /></ToolButton>
          <NewTab><PlusGlyph /></NewTab>
        </Toolbar>

        <SiteHeader>
          <Brand>
            <Fit w={158}>Loco</Fit>
            <Fit w={177}>Perro</Fit>
            <Fit w={349}>Restaurant</Fit>
          </Brand>
          <SiteNav>
            <NavItem>Home</NavItem>
            <NavItem $active>Menu</NavItem>
            <NavItem>Hours &amp; Location</NavItem>
          </SiteNav>
        </SiteHeader>

        <Banner>
          <BannerTitle><Fit w={173}>Menu</Fit></BannerTitle>
        </Banner>

        <Sheet>
          {courses.map((c) => (
            <React.Fragment key={c.title}>
              <Course>{c.title}</Course>
              {c.items.map((item) => (
                <Dish key={item.name}>
                  <strong>{item.name}</strong>:{" "}
                  <em>
                    {item.lines.map((line, i) => (
                      <React.Fragment key={line}>
                        {i > 0 && <br />}
                        {line}
                      </React.Fragment>
                    ))}
                  </em>
                </Dish>
              ))}
            </React.Fragment>
          ))}
        </Sheet>
        <DockShade />
      </Window>

      <DockRow>
        <Rocks />
        <Dock>
          {apps.map(({ name, Icon, running }) => (
            <DockApp key={name} Icon={Icon} running={running} />
          ))}
          <DockLine />
          <DockApp Icon={MiniWindow} />
          <DockApp Icon={Trash} />
        </Dock>
        <Grass />
      </DockRow>
    </Screen>
  );
}
